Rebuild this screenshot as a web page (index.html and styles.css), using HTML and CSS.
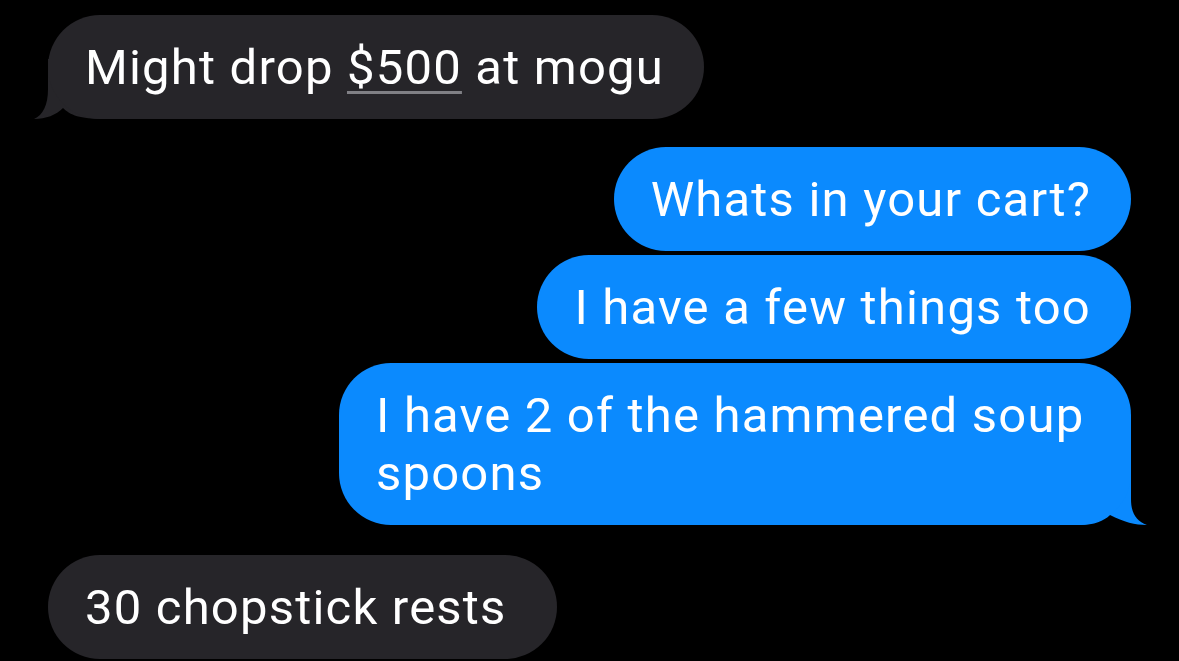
FILE: index.html
```html
<!DOCTYPE html>
<html>
<head>
    <link rel="stylesheet" href="styles.css">
    <meta name="viewport" content="width=device-width, initial-scale=1.0">
    <title>Messages</title>
</head>
<body>
    <div class="thread">
        <div class="msg in">
            Might drop <span class="link">$500</span> at mogu
            <svg class="tail tail-in" viewBox="0 0 70 60"><path d="M14 0 L14 30 C14 46 9 56 0 60 C12 60 22 56 29 49 C36 56 46 60 70 60 L70 0 Z"/></svg>
        </div>
        <div class="msg out first">Whats in your cart?</div>
        <div class="msg out">I have a few things too</div>
        <div class="msg out">
            I have 2 of the hammered soup spoons
            <svg class="tail tail-out" viewBox="0 0 67 60"><path d="M51 0 L51 34 C51 48 56 56 67 60 C55 60 44 57 30 50 C24 56 14 60 0 60 L0 0 Z"/></svg>
        </div>
        <div class="msg in first last">30 chopstick rests</div>
    </div>
</body>
</html>
```

FILE: styles.css
```css
body{
    margin: 0;
    background: #000;
    height: 661px;
    overflow: hidden;
    font-family: Roboto, "Liberation Sans", sans-serif;
}
.thread{
    display: flex;
    flex-direction: column;
    padding: 15px 48px 0 48px;
}
.msg{
    position: relative;
    max-width: 792px;
    box-sizing: border-box;
    padding: 24px 40px 22px 37px;
    border-radius: 52px;
    font-size: 49px;
    line-height: 58px;
    letter-spacing: 1.2px;
    color: #fff;
    margin-top: 4px;
}
.msg.first{
    margin-top: 28px;
}
.msg.last{
    margin-top: 30px;
    padding-right: 50px;
}
.msg:first-child{
    margin-top: 0;
}
.in{
    align-self: flex-start;
    background: #262529;
}
.out{
    align-self: flex-end;
    background: #0b8afe;
}
.link{
    text-decoration: underline;
    text-decoration-color: #808085;
    text-decoration-thickness: 3px;
    text-underline-offset: 7px;
}
.tail{
    position: absolute;
    z-index: -1;
    bottom: 0;
    width: 70px;
    height: 60px;
}
.tail-in{
    left: -14px;
    fill: #262529;
}
.tail-out{
    right: -16px;
    width: 67px;
    fill: #0b8afe;
}
```
